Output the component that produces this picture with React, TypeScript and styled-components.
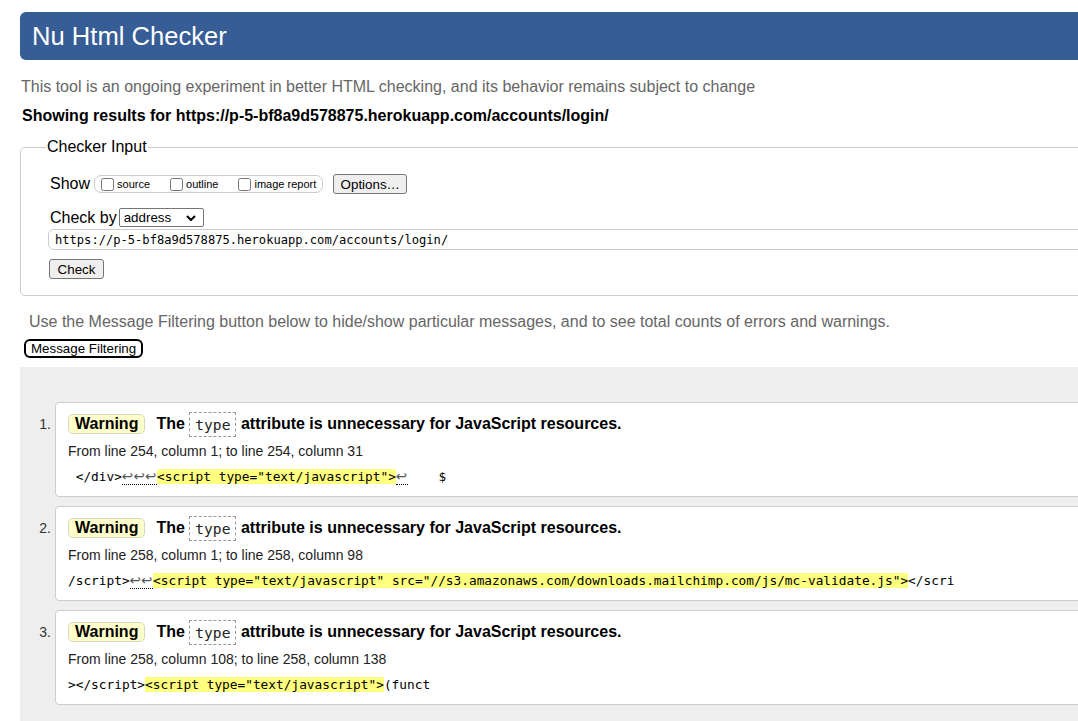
import React from 'react'
import styled, { createGlobalStyle } from 'styled-components'

const GlobalStyle = createGlobalStyle`
  html, body {
    margin: 0;
    padding: 0;
    background: #fff;
    overflow: hidden;
  }
  body {
    font-family: "Liberation Sans", Arial, sans-serif;
    color: #000;
  }
`

type Piece = { text: string; kind: 'plain' | 'lf' | 'hl' }

type Message = {
  id: number
  location: string
  extract: Piece[]
}

const messages: Message[] = [
  {
    id: 1,
    location: 'From line 254, column 1; to line 254, column 31',
    extract: [
      { text: ' </div>', kind: 'plain' },
      { text: '↩↩↩', kind: 'lf' },
      { text: '<script type="text/javascript">', kind: 'hl' },
      { text: '↩', kind: 'lf' },
      { text: '    $', kind: 'plain' },
    ],
  },
  {
    id: 2,
    location: 'From line 258, column 1; to line 258, column 98',
    extract: [
      { text: '/script>', kind: 'plain' },
      { text: '↩↩', kind: 'lf' },
      {
        text: '<script type="text/javascript" src="//s3.amazonaws.com/downloads.mailchimp.com/js/mc-validate.js">',
        kind: 'hl',
      },
      { text: '</scri', kind: 'plain' },
    ],
  },
  {
    id: 3,
    location: 'From line 258, column 108; to line 258, column 138',
    extract: [
      { text: '></script>', kind: 'plain' },
      { text: '<script type="text/javascript">', kind: 'hl' },
      { text: '(funct', kind: 'plain' },
    ],
  },
]

const Page = styled.div`
  width: 1140px;
  padding: 12px 0 0 20px;
`

const Banner = styled.h1`
  margin: 0;
  height: 48px;
  line-height: 48px;
  padding-left: 12px;
  background: #365d95;
  color: #fff;
  font-size: 25.6px;
  font-weight: normal;
  border-radius: 6px 0 0 6px;
`

const Intro = styled.p`
  margin: 18px 0 0 1px;
  font-size: 16px;
  line-height: 18px;
  color: #666;
`

const ResultsFor = styled.p`
  margin: 11px 0 0 2px;
  font-size: 16px;
  line-height: 18px;
  font-weight: bold;
`

const Fieldset = styled.fieldset`
  margin: 13px 0 0;
  padding: 0 0 16px 27px;
  min-width: 0;
  border: 1px solid #ccc;
  border-radius: 5px;
`

const Legend = styled.legend`
  margin-left: -2px;
  padding: 0 1px;
  font-size: 16px;
  line-height: 18px;
`

const Row = styled.div<{ $top: number; $height: number }>`
  display: flex;
  align-items: center;
  margin: ${p => p.$top}px 0 0 2px;
  height: ${p => p.$height}px;
  font-size: 16px;
`

const Group = styled.span`
  display: inline-flex;
  align-items: center;
  gap: 20px;
  height: 18px;
  margin-left: 4px;
  padding: 0 6px 0 6px;
  border: 1px solid #ccc;
  border-radius: 7px;
  box-sizing: border-box;
`

const CheckLabel = styled.label`
  display: inline-flex;
  align-items: center;
  font-size: 11px;
  color: #000;
`

const Checkbox = styled.input`
  width: 13px;
  height: 13px;
  margin: 0 3px 0 0;
`

const Button = styled.button`
  height: 20px;
  padding: 0 6px;
  border: 1px solid #767676;
  border-radius: 3px;
  background: #efefef;
  color: #000;
  font-family: "Liberation Sans", Arial, sans-serif;
  font-size: 13.33px;
  box-sizing: border-box;
`

const OptionsButton = styled(Button)`
  margin-left: 10px;
  width: 74px;
`

const SelectWrap = styled.span`
  position: relative;
  display: inline-block;
  margin-left: 2px;
`

const Select = styled.select`
  appearance: none;
  width: 85px;
  height: 19px;
  padding: 0 0 0 4px;
  border: 1px solid #767676;
  border-radius: 2px;
  background: #fff;
  color: #000;
  font-family: "Liberation Sans", Arial, sans-serif;
  font-size: 13.33px;
  box-sizing: border-box;
`

const Chevron = styled.svg`
  position: absolute;
  right: 8px;
  top: 7px;
  pointer-events: none;
`

const UrlInput = styled.input`
  display: block;
  margin: 2px 0 0;
  width: 100%;
  height: 21px;
  padding: 0 6px;
  border: 1px solid #ccc;
  border-radius: 6px 0 0 6px;
  box-sizing: border-box;
  font-family: "DejaVu Sans Mono", monospace;
  font-size: 12.1px;
  color: #000;
`

const CheckButton = styled(Button)`
  display: block;
  margin: 9px 0 0 1px;
  width: 55px;
`

const FilterNote = styled.p`
  margin: 17px 0 0 9px;
  font-size: 16px;
  line-height: 18px;
  color: #666;
`

const FilterButton = styled.button`
  display: block;
  margin: 8px 0 0 4px;
  height: 19px;
  padding: 0 5px;
  border: 2px solid #000;
  border-radius: 6px;
  background: #fff;
  color: #000;
  font-family: "Liberation Sans", Arial, sans-serif;
  font-size: 13.33px;
  box-sizing: border-box;
`

const ResultsArea = styled.ol`
  list-style: none;
  margin: 9px 0 0;
  padding: 35px 0 40px;
  background: #eee;
`

const Item = styled.li`
  display: flex;
  margin-bottom: 9px;
`

const Num = styled.span`
  flex: none;
  width: 35px;
  padding: 14px 4px 0 0;
  box-sizing: border-box;
  text-align: right;
  font-size: 14px;
  line-height: 16px;
  color: #333;
`

const Card = styled.div`
  flex: 1;
  background: #fff;
  border: 1px solid #ccc;
  border-radius: 4px;
  padding: 8px 12px 10px;
`

const Heading = styled.p`
  display: flex;
  align-items: center;
  margin: 0;
  height: 26px;
  font-size: 16px;
  font-weight: bold;
  white-space: nowrap;
`

const Badge = styled.strong`
  display: inline-block;
  height: 20px;
  line-height: 18px;
  padding: 0 6px;
  border: 1px solid #d8d8c0;
  border-radius: 5px;
  background: #ffffcc;
  box-sizing: border-box;
`

const Text = styled.span`
  margin-left: 11px;
`

const Code = styled.code`
  display: inline-block;
  height: 25px;
  line-height: 23px;
  padding: 0 5px;
  border: 1px dashed #999;
  box-sizing: border-box;
  vertical-align: middle;
  font-family: "DejaVu Sans Mono", monospace;
  font-size: 14.6px;
  font-weight: normal;
  color: #222;
`

const Location = styled.p`
  margin: 6px 0 0;
  font-size: 14px;
  line-height: 16px;
  color: #222;
`

const Extract = styled.p`
  margin: 9px 0 0;
  height: 18px;
  font-family: "DejaVu Sans Mono", monospace;
  font-size: 12.8px;
  line-height: 18px;
  white-space: pre;
  color: #000;
`

const Lf = styled.span`
  font-family: "DejaVu Sans", sans-serif;
  font-size: 13.5px;
  line-height: 1;
  letter-spacing: 0.4px;
  color: #555;
  border-bottom: 1px dotted #000;
`

const Mark = styled.mark`
  background: #ffff80;
  color: inherit;
`

const renderPiece = (piece: Piece, i: number) => {
  if (piece.kind === 'lf') return <Lf key={i}>{piece.text}</Lf>
  if (piece.kind === 'hl') return <Mark key={i}>{piece.text}</Mark>
  return <span key={i}>{piece.text}</span>
}

const App = () => {
  return (
    <Page>
      <GlobalStyle />
      <Banner>Nu Html Checker</Banner>
      <Intro>
        This tool is an ongoing experiment in better HTML checking, and its behavior remains subject to change
      </Intro>
      <ResultsFor>Showing results for https://p-5-bf8a9d578875.herokuapp.com/accounts/login/</ResultsFor>

      <Fieldset>
        <Legend>Checker Input</Legend>
        <Row $top={18} $height={20}>
          Show
          <Group>
            <CheckLabel>
              <Checkbox type="checkbox" />
              source
            </CheckLabel>
            <CheckLabel>
              <Checkbox type="checkbox" />
              outline
            </CheckLabel>
            <CheckLabel>
              <Checkbox type="checkbox" />
              image report
            </CheckLabel>
          </Group>
          <OptionsButton>Options…</OptionsButton>
        </Row>
        <Row $top={14} $height={19}>
          Check by
          <SelectWrap>
            <Select defaultValue="address">
              <option value="address">address</option>
              <option value="upload">file upload</option>
              <option value="textarea">text input</option>
            </Select>
            <Chevron width="10" height="6" viewBox="0 0 10 6">
              <path d="M1 1l4 4 4-4" fill="none" stroke="#000" strokeWidth="2" />
            </Chevron>
          </SelectWrap>
        </Row>
        <UrlInput defaultValue="https://p-5-bf8a9d578875.herokuapp.com/accounts/login/" />
        <CheckButton>Check</CheckButton>
      </Fieldset>

      <FilterNote>
        Use the Message Filtering button below to hide/show particular messages, and to see total counts of errors and warnings.
      </FilterNote>
      <FilterButton>Message Filtering</FilterButton>

      <ResultsArea>
        {messages.map(m => (
          <Item key={m.id}>
            <Num>{m.id}.</Num>
            <Card>
              <Heading>
                <Badge>Warning</Badge>
                <Text>
                  The <Code>type</Code> attribute is unnecessary for JavaScript resources.
                </Text>
              </Heading>
              <Location>{m.location}</Location>
              <Extract>{m.extract.map(renderPiece)}</Extract>
            </Card>
          </Item>
        ))}
      </ResultsArea>
    </Page>
  )
}

export default App
